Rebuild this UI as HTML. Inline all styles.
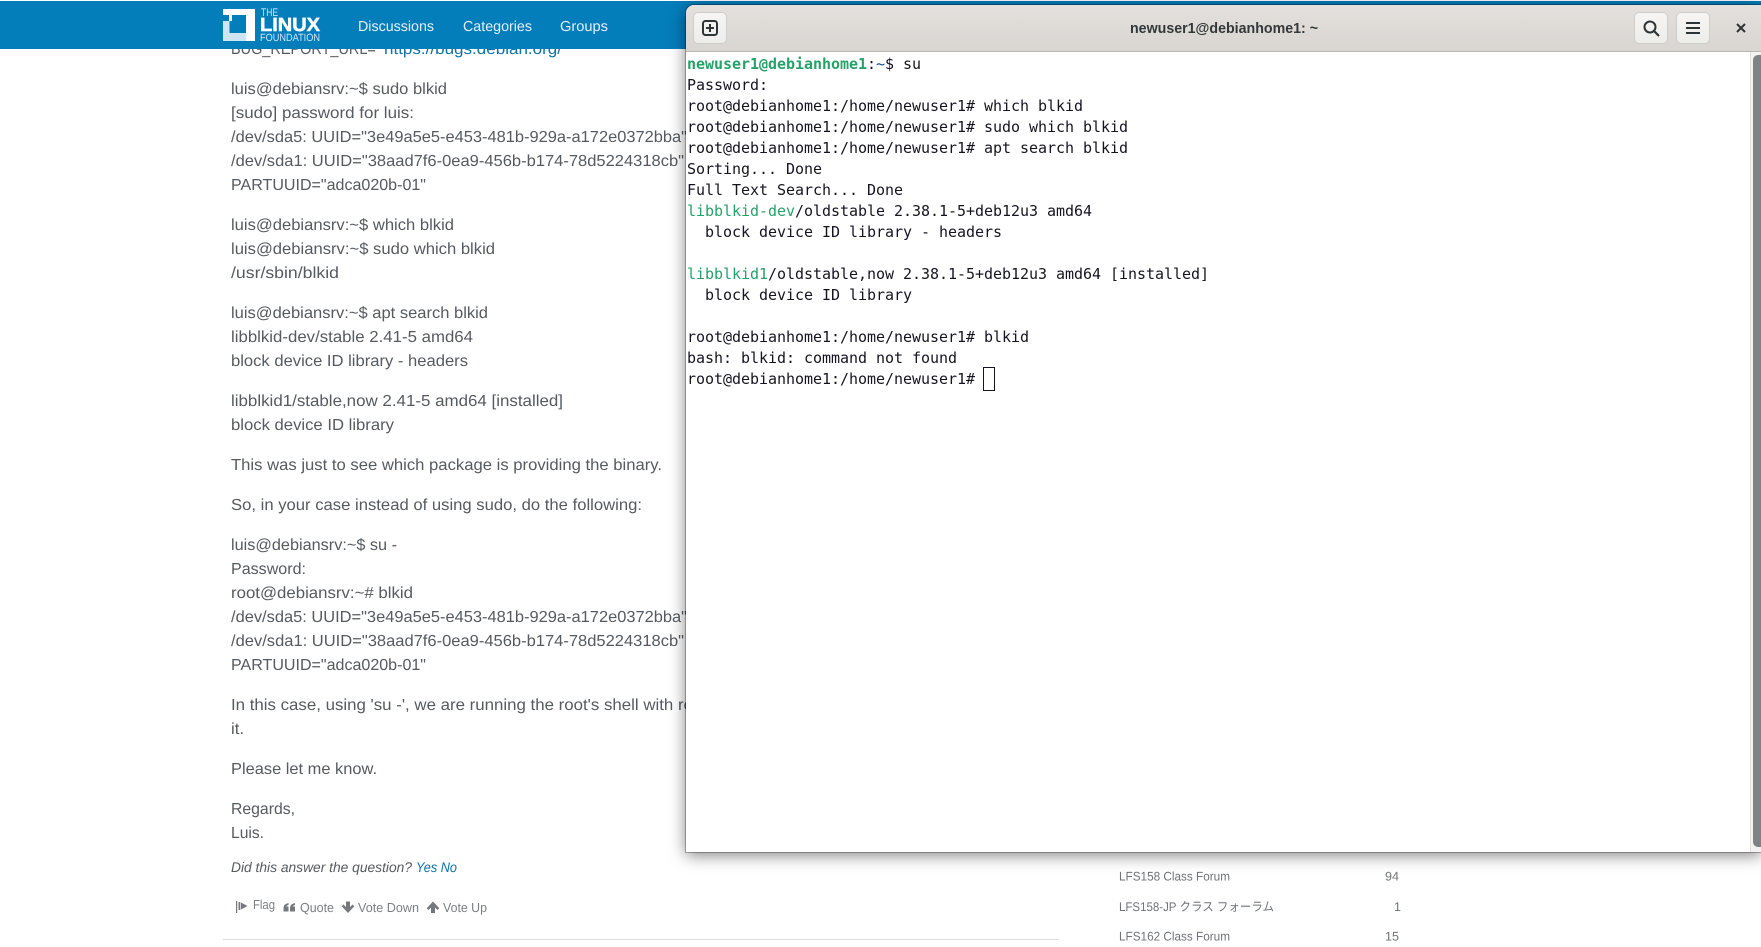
<!DOCTYPE html>
<html lang="en">
<head>
<meta charset="utf-8">
<title>newuser1@debianhome1: ~</title>
<style>
html,body{margin:0;padding:0;width:1761px;height:947px;overflow:hidden;background:#fff}
#page{position:absolute;left:0;top:0}
#win{position:absolute;left:686px;top:5px;width:1075px;height:847px;background:#fff;border-radius:8px 0 0 0;box-shadow:0 3px 16px rgba(0,0,0,.5),0 0 0 1px rgba(0,0,0,.28);overflow:hidden}
#bar{position:absolute;left:0;top:0;width:1075px;height:46px;background:linear-gradient(#e3e0dd,#d9d5d1);border-bottom:1px solid #b9b5b0}
.btn{position:absolute;top:7px;width:32px;height:30px;border:1px solid #d0ccc8;border-radius:5px;background:linear-gradient(#f6f5f4,#ededeb)}
.btn svg{position:absolute;left:-1px;top:-1px}
#title{position:absolute;left:444px;top:11px;width:188px;height:22px}
#term{position:absolute;left:1px;top:49px;font:15px/21px "DejaVu Sans Mono","Liberation Mono",monospace;letter-spacing:-.03px;color:#171421;white-space:pre}
#term b{color:#26a269;font-weight:700}
#term i{color:#26a269;font-style:normal}
#term u{color:#12488b;text-decoration:none}
#cursor{position:absolute;left:297px;top:362px;width:10px;height:22px;border:1px solid #171421}
#track{position:absolute;left:1064px;top:47px;width:11px;height:800px;background:#f4f3f2;border-left:1px solid #e4e1de;box-sizing:border-box}
#thumb{position:absolute;left:2px;top:3px;width:9px;height:792px;background:#7f8383;border-radius:5px 0 0 5px}
</style>
</head>
<body>
<svg id="page" width="1761" height="947" viewBox="0 0 1761 947" xmlns="http://www.w3.org/2000/svg" font-family="'Liberation Sans','Noto Sans CJK JP',sans-serif" text-rendering="geometricPrecision">
<g font-size="16" fill="#565b60">
<text x="231" y="54" textLength="150" lengthAdjust="spacingAndGlyphs">BUG_REPORT_URL="</text>
<text x="384" y="54" textLength="178" lengthAdjust="spacingAndGlyphs" fill="#0d72a8">https://bugs.debian.org/</text>
<text x="231" y="94" textLength="216" lengthAdjust="spacingAndGlyphs">luis@debiansrv:~$ sudo blkid</text>
<text x="231" y="118" textLength="183" lengthAdjust="spacingAndGlyphs">[sudo] password for luis:</text>
<text x="231" y="142" textLength="456" lengthAdjust="spacingAndGlyphs">/dev/sda5: UUID="3e49a5e5-e453-481b-929a-a172e0372bba"</text>
<text x="231" y="166" textLength="453" lengthAdjust="spacingAndGlyphs">/dev/sda1: UUID="38aad7f6-0ea9-456b-b174-78d5224318cb"</text>
<text x="231" y="190" textLength="195" lengthAdjust="spacingAndGlyphs">PARTUUID="adca020b-01"</text>
<text x="231" y="230" textLength="223" lengthAdjust="spacingAndGlyphs">luis@debiansrv:~$ which blkid</text>
<text x="231" y="254" textLength="264" lengthAdjust="spacingAndGlyphs">luis@debiansrv:~$ sudo which blkid</text>
<text x="231" y="278" textLength="108" lengthAdjust="spacingAndGlyphs">/usr/sbin/blkid</text>
<text x="231" y="318" textLength="257" lengthAdjust="spacingAndGlyphs">luis@debiansrv:~$ apt search blkid</text>
<text x="231" y="342" textLength="242" lengthAdjust="spacingAndGlyphs">libblkid-dev/stable 2.41-5 amd64</text>
<text x="231" y="366" textLength="237" lengthAdjust="spacingAndGlyphs">block device ID library - headers</text>
<text x="231" y="406" textLength="332" lengthAdjust="spacingAndGlyphs">libblkid1/stable,now 2.41-5 amd64 [installed]</text>
<text x="231" y="430" textLength="163" lengthAdjust="spacingAndGlyphs">block device ID library</text>
<text x="231" y="470" textLength="431" lengthAdjust="spacingAndGlyphs">This was just to see which package is providing the binary.</text>
<text x="231" y="510" textLength="411" lengthAdjust="spacingAndGlyphs">So, in your case instead of using sudo, do the following:</text>
<text x="231" y="550" textLength="166" lengthAdjust="spacingAndGlyphs">luis@debiansrv:~$ su -</text>
<text x="231" y="574" textLength="75" lengthAdjust="spacingAndGlyphs">Password:</text>
<text x="231" y="598" textLength="182" lengthAdjust="spacingAndGlyphs">root@debiansrv:~# blkid</text>
<text x="231" y="622" textLength="456" lengthAdjust="spacingAndGlyphs">/dev/sda5: UUID="3e49a5e5-e453-481b-929a-a172e0372bba"</text>
<text x="231" y="646" textLength="453" lengthAdjust="spacingAndGlyphs">/dev/sda1: UUID="38aad7f6-0ea9-456b-b174-78d5224318cb"</text>
<text x="231" y="670" textLength="195" lengthAdjust="spacingAndGlyphs">PARTUUID="adca020b-01"</text>
<text x="231" y="710" textLength="476" lengthAdjust="spacingAndGlyphs">In this case, using 'su -', we are running the root's shell with root</text>
<text x="231" y="734" textLength="13" lengthAdjust="spacingAndGlyphs">it.</text>
<text x="231" y="774" textLength="146" lengthAdjust="spacingAndGlyphs">Please let me know.</text>
<text x="231" y="814" textLength="64" lengthAdjust="spacingAndGlyphs">Regards,</text>
<text x="231" y="838" textLength="33" lengthAdjust="spacingAndGlyphs">Luis.</text>
</g>
<g font-size="14" font-style="italic">
<text x="231" y="872" textLength="181" lengthAdjust="spacingAndGlyphs" fill="#565b60">Did this answer the question?</text>
<text x="416" y="872" textLength="41" lengthAdjust="spacingAndGlyphs" fill="#0d72a8">Yes No</text>
</g>
<g font-size="13" fill="#7b7f84">
<text x="253" y="909" textLength="22" lengthAdjust="spacingAndGlyphs">Flag</text>
<text x="300" y="912" textLength="34" lengthAdjust="spacingAndGlyphs">Quote</text>
<text x="358" y="912" textLength="61" lengthAdjust="spacingAndGlyphs">Vote Down</text>
<text x="443" y="912" textLength="44" lengthAdjust="spacingAndGlyphs">Vote Up</text>
</g>
<g fill="#75797e">
<path d="M236 901h1.2v12H236zM238.500 902h1.800v8h-1.800zM241 902.500l6.500 3.500-6.500 3.500z"/>
<path d="M283.500 908q0-4 5-5v2q-2 .5-2 1.500h2v5h-5zM290 908q0-4 5-5v2q-2 .5-2 1.500h2v5h-5z"/>
<path d="M346 901.500h4v5.500l2.500-2.500 1.800 1.800-6.300 6.700-6.300-6.700 1.800-1.800 2.500 2.500z"/>
<path d="M431 913h4v-5.500l2.500 2.500 1.800-1.800-6.300-6.700-6.300 6.700 1.800 1.800 2.500-2.500z"/>
</g>
<rect x="223" y="939" width="836" height="1" fill="#dcdcdc"/>
<g font-size="12.500" fill="#707478">
<text x="1119" y="880.500" textLength="111" lengthAdjust="spacingAndGlyphs">LFS158 Class Forum</text>
<text x="1119" y="911" textLength="155" lengthAdjust="spacingAndGlyphs">LFS158-JP クラス フォーラム</text>
<text x="1119" y="940.500" textLength="111" lengthAdjust="spacingAndGlyphs">LFS162 Class Forum</text>
<text x="1385" y="880.500" textLength="14" lengthAdjust="spacingAndGlyphs">94</text>
<text x="1394" y="911">1</text>
<text x="1385" y="940.500" textLength="14" lengthAdjust="spacingAndGlyphs">15</text>
</g>
<rect x="0" y="1" width="1761" height="48" fill="#047dbb"/>
<path d="M223 9h32v32h-9V15H232v6h-3v-6h-6z" fill="#fff"/>
<path d="M223 21h6.500v12H246v8h-23z" fill="#cfe5f1"/>
<text x="261" y="16" font-size="11" fill="#cfe5f1" textLength="17" lengthAdjust="spacingAndGlyphs">THE</text>
<text x="260" y="31" font-size="19" font-weight="700" fill="#fff" stroke="#fff" stroke-width=".5" textLength="60" lengthAdjust="spacingAndGlyphs">LINUX</text>
<text x="260" y="41" font-size="10.500" fill="#cfe5f1" textLength="60" lengthAdjust="spacingAndGlyphs">FOUNDATION</text>
<g font-size="14.500" fill="#e3f0f7">
<text x="358" y="31" textLength="76" lengthAdjust="spacingAndGlyphs">Discussions</text>
<text x="463" y="31" textLength="69" lengthAdjust="spacingAndGlyphs">Categories</text>
<text x="560" y="31" textLength="48" lengthAdjust="spacingAndGlyphs">Groups</text>
</g>
</svg>

<div id="win">
  <div id="bar">
    <div class="btn" style="left:7px"><svg width="33" height="31" viewBox="0 0 33 31"><rect x="10" y="9" width="14" height="14" rx="2.500" fill="none" stroke="#2e3436" stroke-width="2"/><path d="M17 12v8M13 16h8" stroke="#2e3436" stroke-width="2" fill="none"/></svg></div>
    <svg id="title" viewBox="0 0 188 22"><text x="0" y="17" font-family="'Liberation Sans',sans-serif" font-weight="700" font-size="15" fill="#33383a" textLength="188" lengthAdjust="spacingAndGlyphs">newuser1@debianhome1: ~</text></svg>
    <div class="btn" style="left:948px"><svg width="33" height="31" viewBox="0 0 33 31"><circle cx="16" cy="15" r="5.500" fill="none" stroke="#2e3436" stroke-width="2"/><path d="M20 19l5 5" stroke="#2e3436" stroke-width="2.200" fill="none"/></svg></div>
    <div class="btn" style="left:990px"><svg width="33" height="31" viewBox="0 0 33 31"><path d="M10 10h14v2H10zM10 15h14v2H10zM10 20h14v2H10z" fill="#2e3436"/></svg></div>
    <svg style="position:absolute;left:1048px;top:16px" width="14" height="14" viewBox="0 0 14 14"><path d="M3 3l8 8M11 3l-8 8" stroke="#2e3436" stroke-width="2" fill="none"/></svg>
  </div>
  <div id="term"><b>newuser1@debianhome1</b>:<u>~</u>$ su
Password:
root@debianhome1:/home/newuser1# which blkid
root@debianhome1:/home/newuser1# sudo which blkid
root@debianhome1:/home/newuser1# apt search blkid
Sorting... Done
Full Text Search... Done
<i>libblkid-dev</i>/oldstable 2.38.1-5+deb12u3 amd64
  block device ID library - headers

<i>libblkid1</i>/oldstable,now 2.38.1-5+deb12u3 amd64 [installed]
  block device ID library

root@debianhome1:/home/newuser1# blkid
bash: blkid: command not found
root@debianhome1:/home/newuser1# </div>
  <div id="cursor"></div>
  <div id="track"><div id="thumb"></div></div>
</div>
</body>
</html>
